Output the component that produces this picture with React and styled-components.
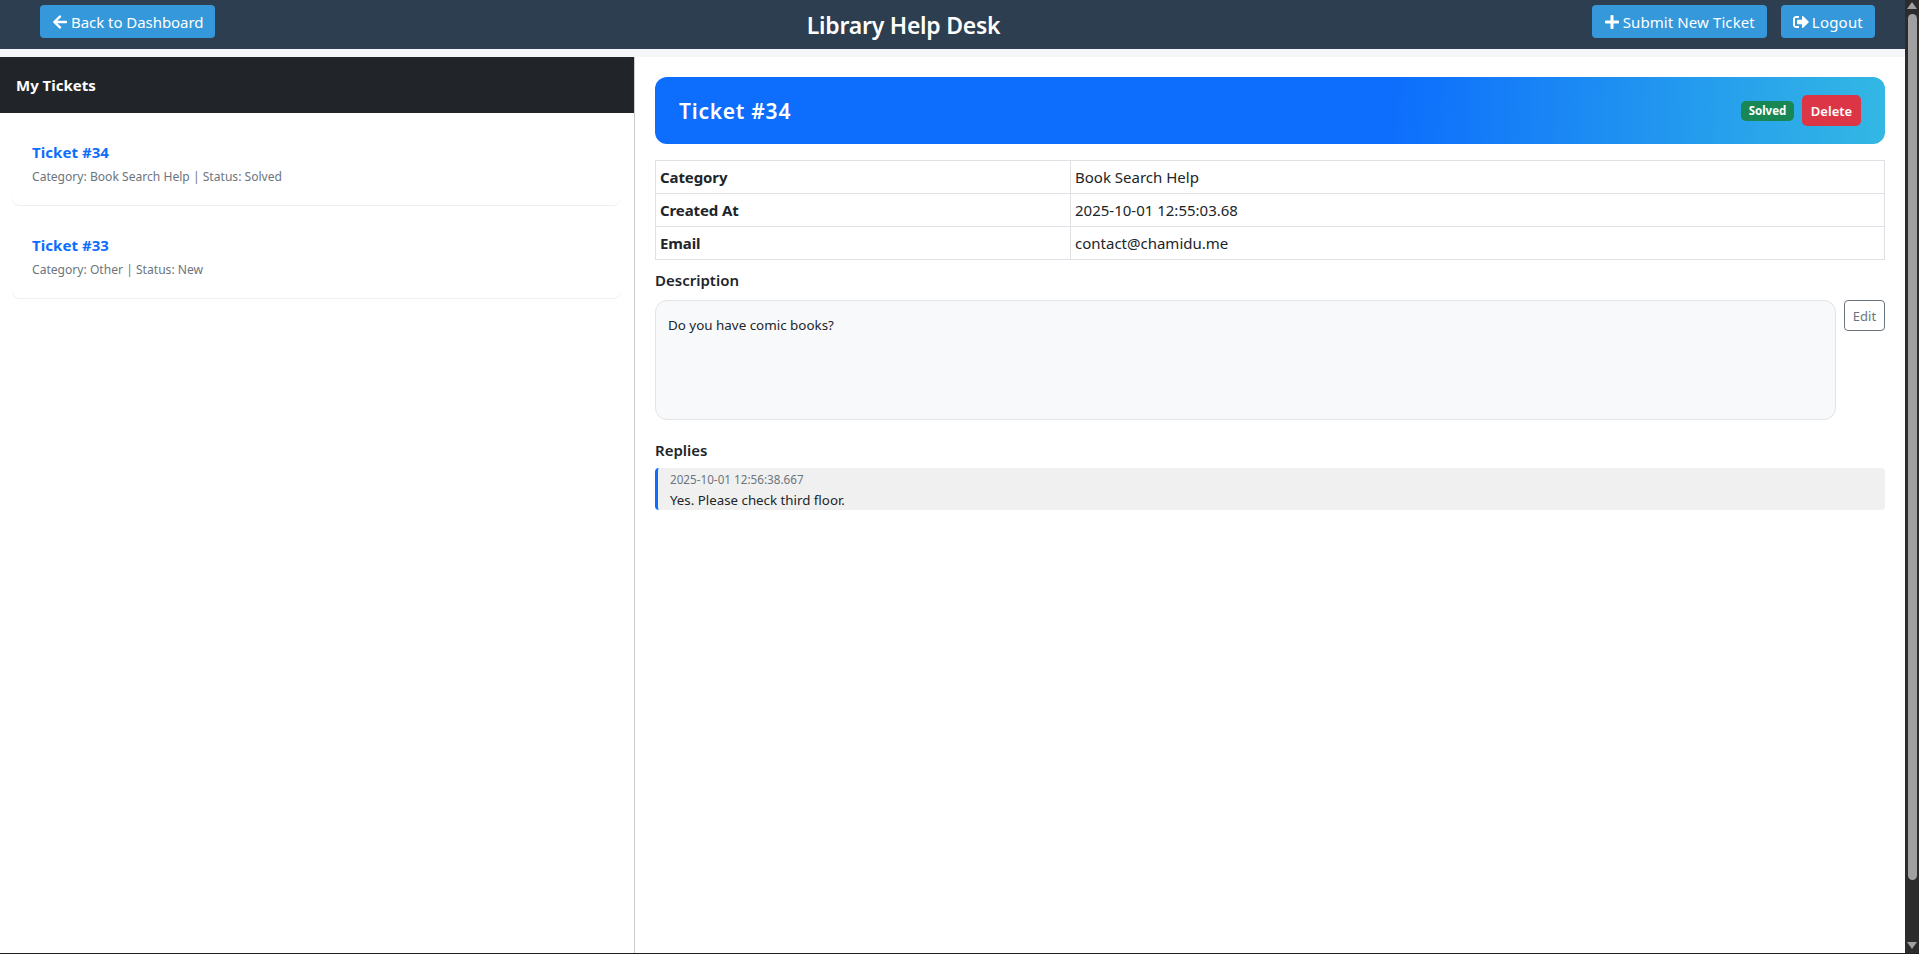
import React from 'react'
import styled, { createGlobalStyle } from 'styled-components'
import { FaArrowLeft, FaPlus, FaSignOutAlt } from 'react-icons/fa'

const GlobalStyle = createGlobalStyle`
  html, body {
    margin: 0;
    height: 100%;
    overflow: hidden;
  }
  body {
    font-family: "Noto Sans", "Open Sans", sans-serif;
    color: #212529;
    background: #fff;
  }
  * { box-sizing: border-box; }
`

const Shell = styled.div`
  display: flex;
  height: 100vh;
  border-bottom: 1px solid #1e1e1e;
`

const Page = styled.div`
  flex: 1;
  min-width: 0;
  display: flex;
  flex-direction: column;
  background: #f4f6f9;
`

const Header = styled.header`
  height: 49px;
  flex: none;
  display: flex;
  justify-content: space-between;
  align-items: center;
  padding: 0 30px 0 40px;
  background: #2c3e50;
  color: #fff;
`

const Title = styled.h1`
  margin: 0;
  font-size: 23px;
  font-weight: 600;
  letter-spacing: -0.25px;
`

const HeaderActions = styled.div`
  display: flex;
  gap: 14px;
  margin-top: -6px;
`

const HeaderButton = styled.button`
  height: 33px;
  padding: 0 12px;
  display: flex;
  align-items: center;
  gap: 3px;
  border: 0;
  border-radius: 4px;
  background: #3498db;
  color: #fff;
  font: 400 15px "Noto Sans", sans-serif;
  letter-spacing: ${p => p.$track || 0}px;

  svg { width: auto; height: 16px; }
`

const BackButton = styled(HeaderButton)`
  margin-top: -6px;
`

const Body = styled.div`
  flex: 1;
  min-height: 0;
  margin-top: 8px;
  display: flex;
  background: #fff;
`

const Sidebar = styled.aside`
  width: 635px;
  flex: none;
  border-right: 1px solid #ccc;
`

const SidebarHead = styled.div`
  height: 56px;
  display: flex;
  align-items: center;
  padding-left: 16px;
  background: #212529;
  color: #fff;
  font-size: 15px;
  font-weight: 700;
`

const TicketList = styled.div`
  display: flex;
  flex-direction: column;
  gap: 10px;
  padding: 9px 13px 0 12px;
`

const TicketCard = styled.div`
  height: 83px;
  padding: 21px 20px 0;
  border-radius: 8px;
  background: #fff;
  box-shadow: 0 1px 1px rgba(0, 0, 0, 0.07);
`

const TicketName = styled.div`
  font-size: 15px;
  line-height: 19px;
  font-weight: 700;
  letter-spacing: 0.05px;
  color: #0d6efd;
`

const TicketMeta = styled.div`
  margin-top: 6px;
  font-size: 12.1px;
  line-height: 17px;
  color: #6c757d;
`

const Main = styled.main`
  flex: 1;
  min-width: 0;
  padding: 20px 20px 0;
`

const Banner = styled.div`
  height: 67px;
  display: flex;
  align-items: center;
  justify-content: space-between;
  padding: 0 24px;
  border-radius: 12px;
  background: linear-gradient(93deg, #0d6efd 60%, #33b8e4 100%);
  color: #fff;
`

const BannerTitle = styled.h2`
  margin: 0;
  font-size: 21px;
  font-weight: 600;
  letter-spacing: 0.75px;
`

const BannerActions = styled.div`
  display: flex;
  align-items: center;
  gap: 8px;
`

const Badge = styled.span`
  width: 53px;
  height: 20px;
  display: flex;
  align-items: center;
  justify-content: center;
  border-radius: 5px;
  background: #198754;
  font-size: 11.5px;
  font-weight: 700;
`

const DeleteButton = styled.button`
  width: 59px;
  height: 31px;
  padding: 0;
  border: 0;
  border-radius: 5px;
  background: #dc3545;
  color: #fff;
  font: 600 13px "Noto Sans", sans-serif;
`

const InfoTable = styled.table`
  width: 100%;
  margin-top: 16px;
  border-collapse: collapse;
  table-layout: fixed;
  font-size: 15px;

  td, th {
    height: 33px;
    padding: 0 4px;
    border: 1px solid #dee2e6;
    text-align: left;
  }
  th { width: 415px; font-weight: 700; letter-spacing: -0.1px; }
`

const SectionLabel = styled.div`
  margin-top: ${p => p.$top}px;
  font-size: 15px;
  line-height: 20px;
  font-weight: 600;
`

const DescriptionRow = styled.div`
  margin-top: 10px;
  display: flex;
  align-items: flex-start;
  gap: 8px;
`

const DescriptionBox = styled.div`
  flex: 1;
  height: 120px;
  padding: 14px 12px;
  border: 1px solid #e1e4e8;
  border-radius: 12px;
  background: #f8f9fa;
  font-size: 13.4px;
  line-height: 20px;
  color: #212529;
`

const EditButton = styled.button`
  width: 41px;
  height: 31px;
  padding: 0;
  border: 1px solid #6c757d;
  border-radius: 4px;
  background: #fff;
  color: #6c757d;
  font: 400 13px "Noto Sans", sans-serif;
`

const Reply = styled.div`
  height: 42px;
  margin-top: 8px;
  padding: 2px 12px 0 12px;
  border-left: 3px solid #0d6efd;
  border-radius: 4px;
  background: #f0f0f0;
  overflow: hidden;
`

const ReplyDate = styled.div`
  font-size: 11.7px;
  line-height: 19px;
  color: #6c757d;
`

const ReplyText = styled.div`
  margin-top: 1px;
  font-size: 13.3px;
  line-height: 20px;
  color: #212529;
`

const Scrollbar = styled.div`
  width: 14px;
  flex: none;
  display: flex;
  flex-direction: column;
  align-items: center;
  padding: 2px 0 4px;
  background: #2c2c2c;
`

const ScrollArrow = styled.svg`
  width: 10px;
  height: 7px;
  flex: none;
  fill: #a0a0a0;
`

const ScrollThumb = styled.div`
  width: 9px;
  height: 866px;
  margin-top: 5px;
  border-radius: 5px;
  background: #a0a0a0;
`

const ScrollGap = styled.div`
  flex: 1;
`

const tickets = [
  { id: 34, meta: 'Category: Book Search Help | Status: Solved' },
  { id: 33, meta: 'Category: Other | Status: New' },
]

const details = [
  ['Category', 'Book Search Help'],
  ['Created At', '2025-10-01 12:55:03.68'],
  ['Email', 'contact@chamidu.me'],
]

export default function App() {
  return (
    <Shell>
      <GlobalStyle />
      <Page>
        <Header>
          <BackButton $track={-0.05}><FaArrowLeft /> Back to Dashboard</BackButton>
          <Title>Library Help Desk</Title>
          <HeaderActions>
            <HeaderButton $track={0.1}><FaPlus /> Submit New Ticket</HeaderButton>
            <HeaderButton $track={0.2}><FaSignOutAlt /> Logout</HeaderButton>
          </HeaderActions>
        </Header>
        <Body>
          <Sidebar>
            <SidebarHead>My Tickets</SidebarHead>
            <TicketList>
              {tickets.map(t => (
                <TicketCard key={t.id}>
                  <TicketName>Ticket #{t.id}</TicketName>
                  <TicketMeta>{t.meta}</TicketMeta>
                </TicketCard>
              ))}
            </TicketList>
          </Sidebar>
          <Main>
            <Banner>
              <BannerTitle>Ticket #34</BannerTitle>
              <BannerActions>
                <Badge>Solved</Badge>
                <DeleteButton>Delete</DeleteButton>
              </BannerActions>
            </Banner>
            <InfoTable>
              <tbody>
                {details.map(([k, v]) => (
                  <tr key={k}><th>{k}</th><td>{v}</td></tr>
                ))}
              </tbody>
            </InfoTable>
            <SectionLabel $top={10}>Description</SectionLabel>
            <DescriptionRow>
              <DescriptionBox>Do you have comic books?</DescriptionBox>
              <EditButton>Edit</EditButton>
            </DescriptionRow>
            <SectionLabel $top={20}>Replies</SectionLabel>
            <Reply>
              <ReplyDate>2025-10-01 12:56:38.667</ReplyDate>
              <ReplyText>Yes. Please check third floor.</ReplyText>
            </Reply>
          </Main>
        </Body>
      </Page>
      <Scrollbar>
        <ScrollArrow viewBox="0 0 10 7"><path d="M5 0l5 7H0z" /></ScrollArrow>
        <ScrollThumb />
        <ScrollGap />
        <ScrollArrow viewBox="0 0 10 7"><path d="M0 0h10L5 7z" /></ScrollArrow>
      </Scrollbar>
    </Shell>
  )
}
